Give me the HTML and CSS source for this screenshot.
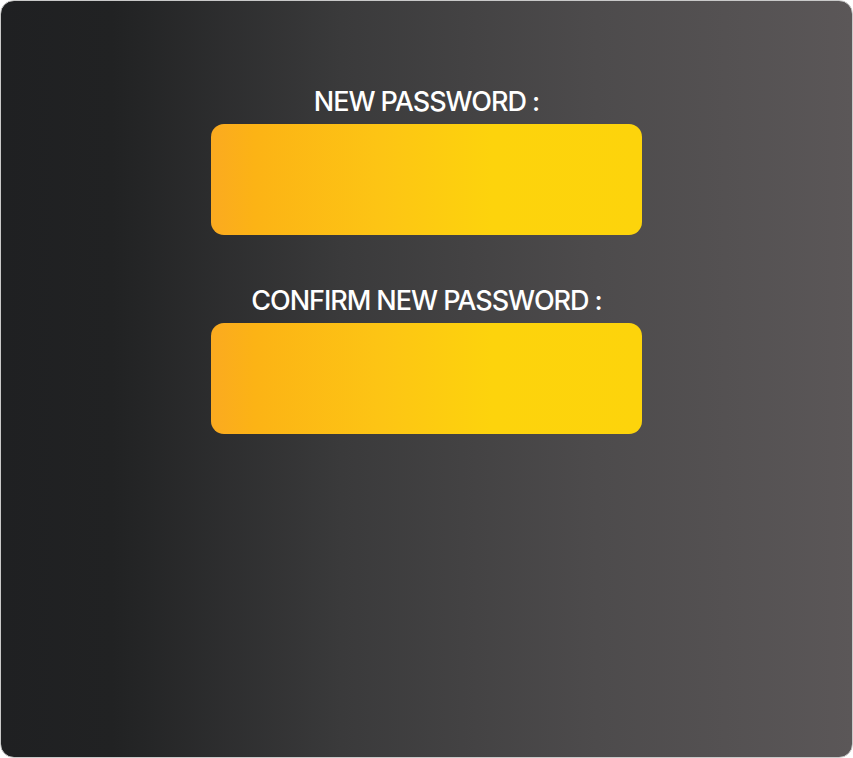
FILE: index.html
```html
<!DOCTYPE html>
<html lang="en">
<head>
<meta charset="utf-8">
<title>Change password</title>
<link rel="stylesheet" href="styles.css">
</head>
<body>
<main class="card">
  <form class="form">
    <label class="field">
      <span class="label">NEW PASSWORD :</span>
      <input class="input" type="password">
    </label>
    <label class="field">
      <span class="label">CONFIRM NEW PASSWORD :</span>
      <input class="input" type="password">
    </label>
  </form>
</main>
</body>
</html>
```

FILE: styles.css
```css
html, body {
  margin: 0;
  padding: 0;
  background: #ffffff;
}
body {
  width: 853px;
  height: 758px;
  font-family: Inter, "Noto Sans", sans-serif;
}
.card {
  box-sizing: border-box;
  width: 853px;
  height: 758px;
  border: 1px solid #c9c9c9;
  border-radius: 14px;
  background: linear-gradient(90deg, #1f2022 0%, #212223 13%, #3a3a3b 40%, #4d4b4c 70%, #5b5758 100%);
  display: flex;
  justify-content: center;
  padding-top: 85px;
}
.form {
  display: flex;
  flex-direction: column;
  align-items: center;
  gap: 50px;
}
.field {
  display: flex;
  flex-direction: column;
  align-items: center;
  gap: 6px;
}
.label {
  color: #ffffff;
  font-size: 27px;
  line-height: 32px;
  font-weight: 500;
  letter-spacing: -1.05px;
}
.input {
  box-sizing: border-box;
  width: 431px;
  height: 111px;
  border: none;
  border-radius: 13px;
  background: linear-gradient(90deg, #fbaa20 0%, #fcb315 10%, #fdc514 40%, #fdd30c 65%, #fdd40b 100%);
  outline: none;
}
```
